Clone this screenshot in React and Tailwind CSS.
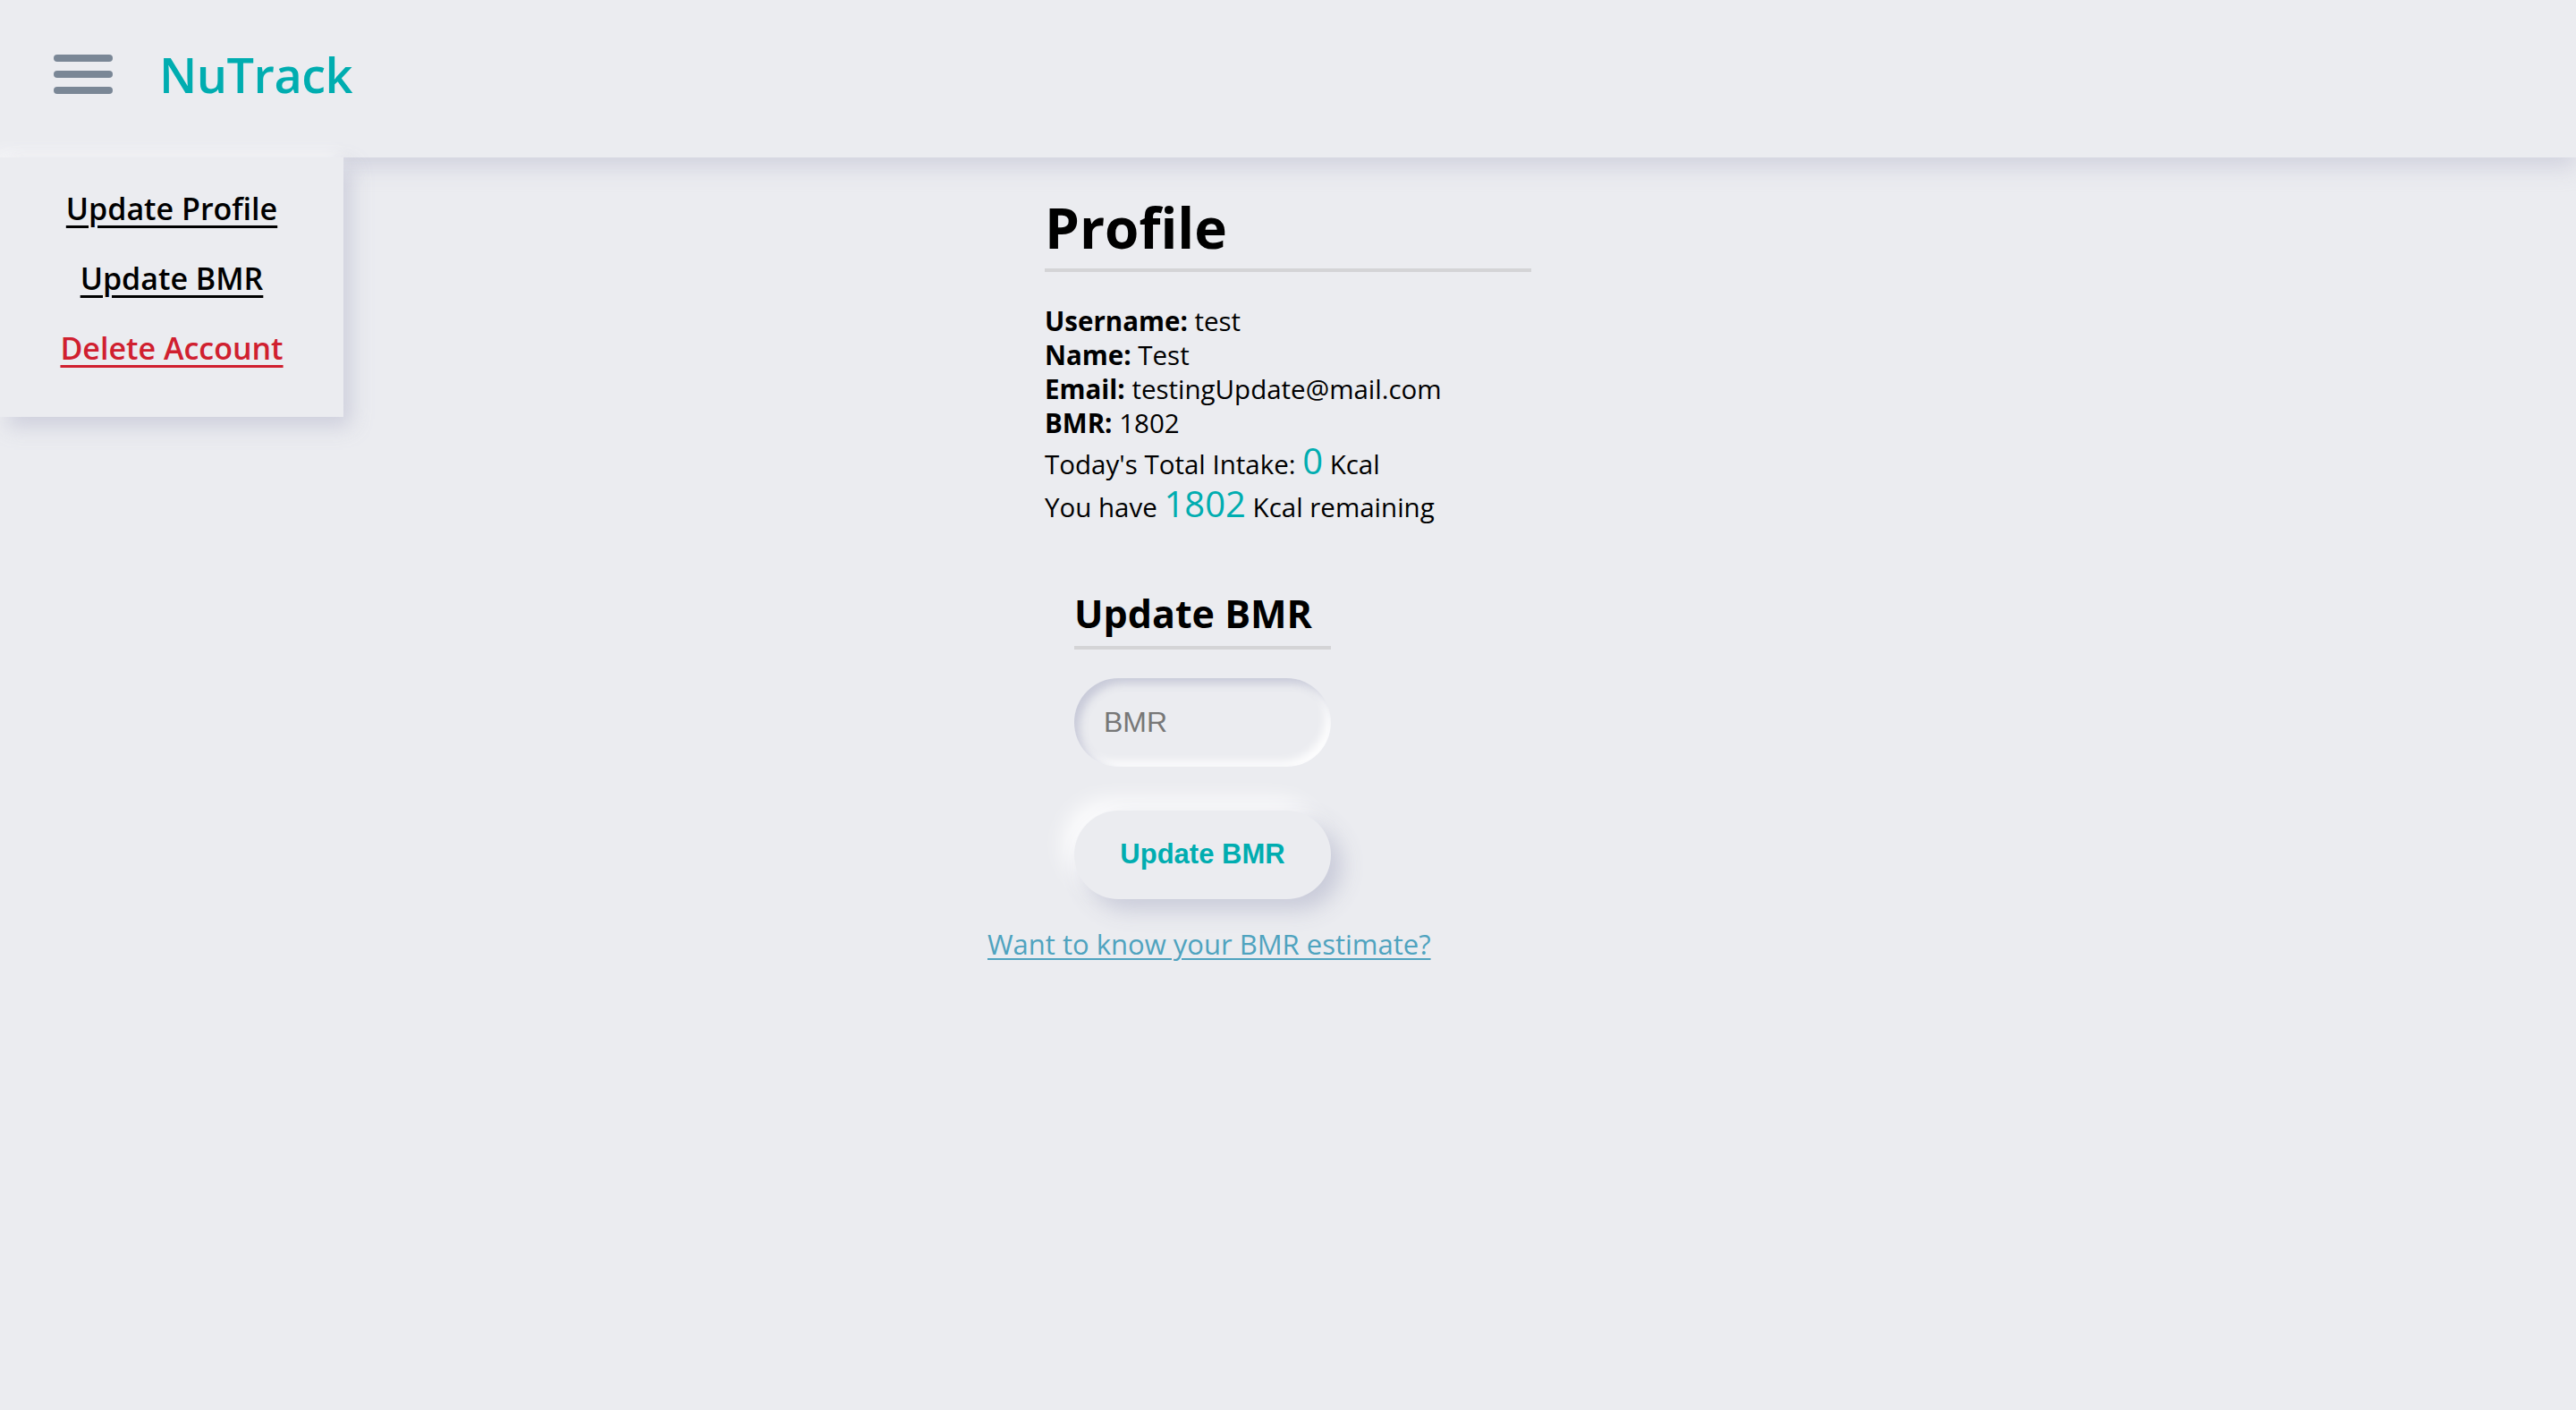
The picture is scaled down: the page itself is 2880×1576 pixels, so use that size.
import React from 'react';

function Hamburger() {
  return (
    <svg width="66" height="44" viewBox="0 0 66 44" className="shrink-0">
      <rect x="0" y="0" width="66" height="8" rx="4" fill="#7a8796" />
      <rect x="0" y="18" width="66" height="8" rx="4" fill="#7a8796" />
      <rect x="0" y="36" width="66" height="8" rx="4" fill="#7a8796" />
    </svg>
  );
}

export default function App() {
  return (
    <div className="relative min-h-[1576px] w-full bg-[#ebecf0] text-black font-['Open_Sans',sans-serif]">
      {/* header */}
      <header className="relative z-10 flex h-[176px] items-center gap-[52px] bg-[#ebecf0] pb-[10px] pl-[60px] shadow-[0_10px_24px_rgba(196,198,214,0.7)]">
        <Hamburger />
        <span className="text-[54px] font-semibold tracking-[-0.5px] text-[#00adb0]">NuTrack</span>
      </header>

      {/* side menu */}
      <nav className="absolute left-0 top-[176px] z-20 flex w-[384px] flex-col items-center gap-[32px] bg-[#ebecf0] pb-[54px] pt-[34px] shadow-[8px_10px_22px_rgba(196,198,214,0.8),-6px_-6px_16px_rgba(255,255,255,0.7)]">
        <a href="#" className="text-[34px] font-semibold leading-[46px] text-black underline decoration-[3px] underline-offset-[6px]">Update Profile</a>
        <a href="#" className="text-[34px] font-semibold leading-[46px] text-black underline decoration-[3px] underline-offset-[6px]">Update BMR</a>
        <a href="#" className="text-[34px] font-semibold leading-[46px] text-[#d0202f] underline decoration-[3px] underline-offset-[6px]">Delete Account</a>
      </nav>

      {/* main content */}
      <main className="flex justify-center pt-[38px]">
        <div className="w-[544px]">
          <h1 className="text-[62px] font-bold leading-[80px]">Profile</h1>
          <div className="mt-[6px] h-[4px] w-full bg-[#d4d4d6]" />

          <div className="mt-[36px] text-[29.5px] leading-[38px]">
            <p><b>Username:</b> test</p>
            <p><b>Name:</b> Test</p>
            <p><b>Email:</b> testingUpdate@mail.com</p>
            <p><b>BMR:</b> 1802</p>
            <p className="leading-[46px]">Today's Total Intake: <span className="text-[40px] text-[#00adb0]">0</span> Kcal</p>
            <p className="-mt-[2px] leading-[46px]">You have <span className="text-[40px] text-[#00adb0]">1802</span> Kcal remaining</p>
          </div>

          <div className="ml-[33px] mt-[68px] w-[287px]">
            <h2 className="text-[43px] font-bold leading-[56px]">Update BMR</h2>
            <div className="mt-[8px] h-[4px] w-full bg-[#d4d4d6]" />
            <input
              type="text"
              placeholder="BMR"
              className="mt-[32px] h-[99px] w-full rounded-full bg-[#ebecf0] px-[33px] font-['Liberation_Sans',Arial,sans-serif] text-[32px] text-black outline-none placeholder:text-[#777] shadow-[inset_6px_6px_10px_rgba(196,198,214,0.9),inset_-6px_-6px_10px_rgba(255,255,255,0.9)]"
            />
            <button className="mt-[49px] flex h-[99px] w-full items-center justify-center rounded-full bg-[#ebecf0] font-['Liberation_Sans',Arial,sans-serif] text-[31px] font-bold text-[#00adb0] shadow-[12px_12px_24px_rgba(196,198,214,0.9),-12px_-12px_24px_rgba(255,255,255,0.9)]">
              Update BMR
            </button>
          </div>

          <a href="#" className="-ml-[64px] mt-[30px] block text-[31px] leading-[40px] text-[#4fa3bf] underline decoration-[2px] underline-offset-[4px]">
            Want to know your BMR estimate?
          </a>
        </div>
      </main>
    </div>
  );
}
